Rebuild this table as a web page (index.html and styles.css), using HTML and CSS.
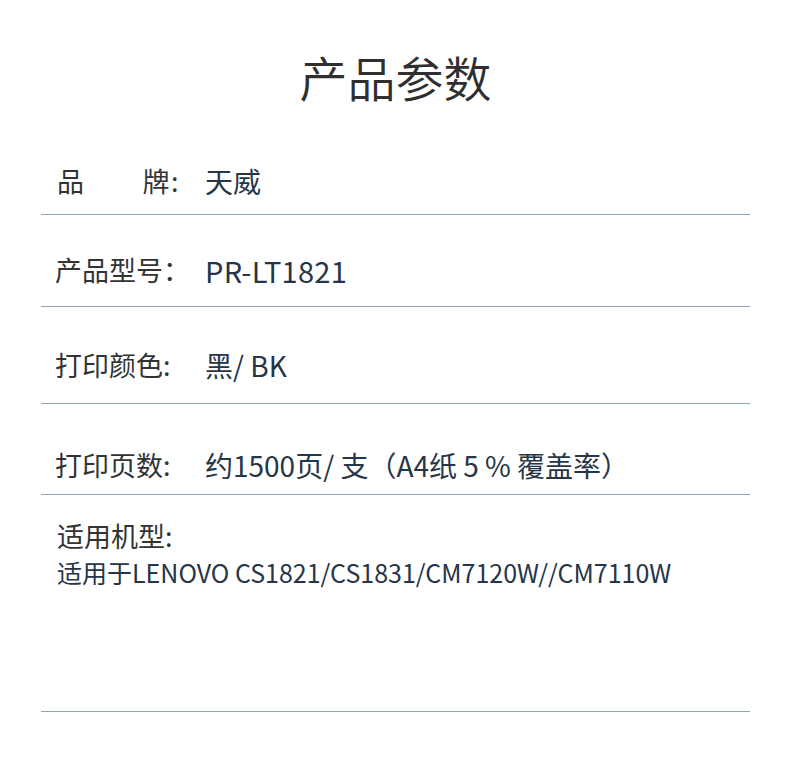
FILE: index.html
```html
<!DOCTYPE html>
<html lang="zh-CN">
<head>
  <meta charset="UTF-8">
  <meta name="viewport" content="width=device-width, initial-scale=1.0">
  <title>产品参数</title>
  <link rel="stylesheet" href="styles.css">
</head>
<body>
  <div class="page">
    <h1 class="title">产品参数</h1>

    <div class="spec-list">
      <div class="spec-row row-brand">
        <div class="spec-label label-wide">品　　牌:</div>
        <div class="spec-value">天威</div>
      </div>

      <div class="spec-row row-model">
        <div class="spec-label">产品型号：</div>
        <div class="spec-value model-code">PR-LT1821</div>
      </div>

      <div class="spec-row row-color">
        <div class="spec-label">打印颜色:</div>
        <div class="spec-value">黑/ BK</div>
      </div>

      <div class="spec-row row-pages">
        <div class="spec-label">打印页数:</div>
        <div class="spec-value">约1500页/ 支（A4纸 5 % 覆盖率）</div>
      </div>

      <div class="spec-row row-fit">
        <div class="spec-label">适用机型:</div>
        <div class="spec-note">适用于LENOVO CS1821/CS1831/CM7120W//CM7110W</div>
      </div>
    </div>
  </div>
</body>
</html>
```

FILE: styles.css
```css
body {
  margin: 0;
  padding: 0;
  background-color: #FFFFFF;
  font-family: "Noto Sans CJK SC", "Noto Sans", sans-serif;
  color: #333333;
}

.page {
  width: 790px;
  height: 760px;
  padding: 0 40px 0 41px;
  box-sizing: border-box;
}

.title {
  margin: 0;
  padding-top: 46px;
  height: 111px;
  box-sizing: border-box;
  text-align: center;
  font-size: 48px;
  font-weight: 350;
  line-height: 60px;
  color: #2F2F2F;
}

.spec-list {
  display: flex;
  flex-direction: column;
}

.spec-row {
  display: flex;
  align-items: center;
  padding-left: 14px;
  border-bottom: 1px solid #8FA4B8;
  font-size: 27px;
  line-height: 40px;
}

.spec-label {
  width: 150px;
  flex-shrink: 0;
  color: #333333;
}

.label-wide {
  padding-left: 2px;
  width: 148px;
  letter-spacing: 1.5px;
}

.spec-value {
  margin-left: 0;
  font-size: 28px;
  color: #263547;
}

.model-code {
  font-size: 29px;
  letter-spacing: 0.3px;
}

.row-brand {
  padding-top: 50px;
  padding-bottom: 13px;
}

.row-model {
  padding-top: 35px;
  padding-bottom: 16px;
}

.row-color {
  padding-top: 38px;
  padding-bottom: 18px;
}

.row-pages {
  padding-top: 41px;
  padding-bottom: 9px;
}

.row-fit {
  flex-direction: column;
  align-items: flex-start;
  padding-left: 16px;
  padding-top: 23px;
  height: 217px;
  box-sizing: border-box;
  line-height: 36px;
}

.spec-note {
  font-size: 25px;
  line-height: 36px;
  color: #263547;
}
```
